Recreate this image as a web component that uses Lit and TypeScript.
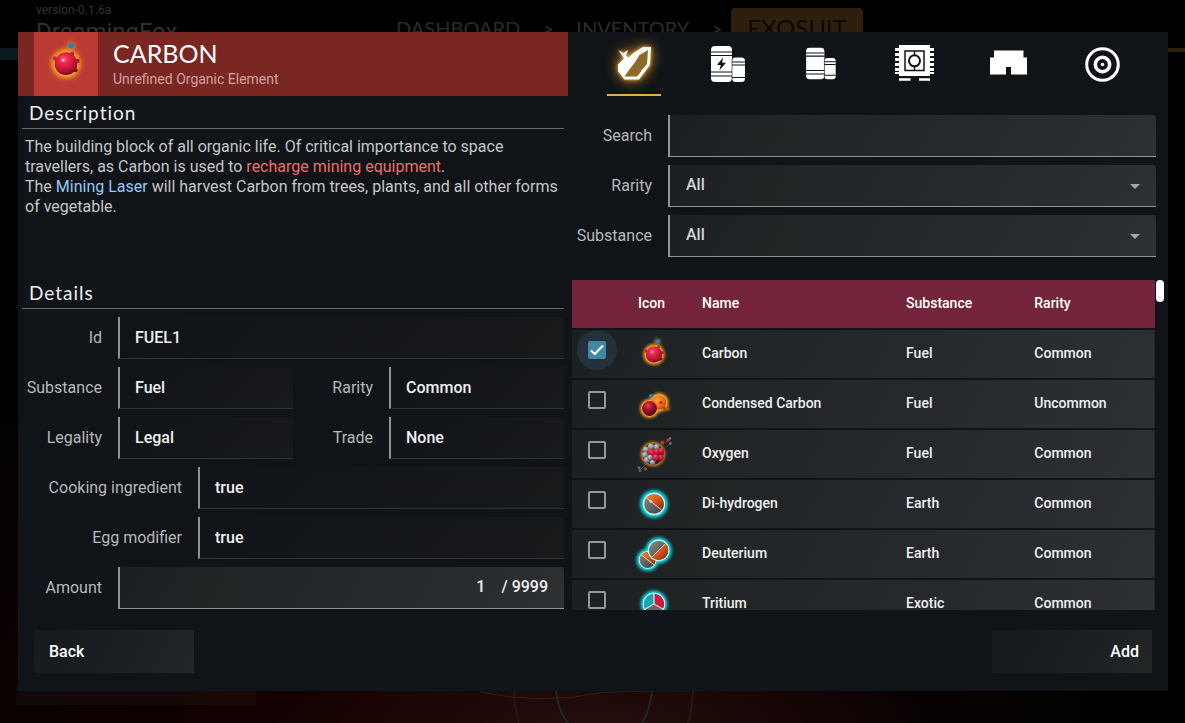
import { LitElement, html, css, svg } from "lit";
import { customElement, state } from "lit/decorators.js";

interface Item {
  id: string;
  name: string;
  substance: string;
  rarity: string;
}

const items: Item[] = [
  { id: "carbon", name: "Carbon", substance: "Fuel", rarity: "Common" },
  { id: "condensed", name: "Condensed Carbon", substance: "Fuel", rarity: "Uncommon" },
  { id: "oxygen", name: "Oxygen", substance: "Fuel", rarity: "Common" },
  { id: "dihydrogen", name: "Di-hydrogen", substance: "Earth", rarity: "Common" },
  { id: "deuterium", name: "Deuterium", substance: "Earth", rarity: "Common" },
  { id: "tritium", name: "Tritium", substance: "Exotic", rarity: "Common" },
];

/* Shared paints for the element artwork, drawn on a 40 x 40 canvas. */
const paints = svg`
  <defs>
    <radialGradient id="red" cx="0.4" cy="0.3" r="0.75">
      <stop offset="0" stop-color="#ff5a78"></stop>
      <stop offset="0.3" stop-color="#ee2347"></stop>
      <stop offset="0.75" stop-color="#b01230"></stop>
      <stop offset="1" stop-color="#5a0a1c"></stop>
    </radialGradient>
    <radialGradient id="darkred" cx="0.4" cy="0.3" r="0.75">
      <stop offset="0" stop-color="#e84058"></stop>
      <stop offset="0.4" stop-color="#a81028"></stop>
      <stop offset="1" stop-color="#450612"></stop>
    </radialGradient>
    <radialGradient id="orange" cx="0.4" cy="0.35" r="0.75">
      <stop offset="0" stop-color="#ffa23e"></stop>
      <stop offset="0.6" stop-color="#e96a12"></stop>
      <stop offset="1" stop-color="#a33c08"></stop>
    </radialGradient>
    <radialGradient id="grey" cx="0.4" cy="0.3" r="0.8">
      <stop offset="0" stop-color="#d0d0d0"></stop>
      <stop offset="0.5" stop-color="#8c8c8c"></stop>
      <stop offset="1" stop-color="#3a3a3a"></stop>
    </radialGradient>
    <linearGradient id="ember" x1="0" y1="0" x2="1" y2="1">
      <stop offset="0" stop-color="#f58a2a"></stop>
      <stop offset="0.5" stop-color="#d9531a"></stop>
      <stop offset="1" stop-color="#7c2408"></stop>
    </linearGradient>
    <linearGradient id="steel" x1="0" y1="0" x2="1" y2="1">
      <stop offset="0" stop-color="#8c8c8c"></stop>
      <stop offset="1" stop-color="#3c3c3c"></stop>
    </linearGradient>
    <filter id="blur" x="-60%" y="-60%" width="220%" height="220%">
      <feGaussianBlur stdDeviation="1.7"></feGaussianBlur>
    </filter>
  </defs>`;

const art: Record<string, unknown> = {
  carbon: svg`
    <circle cx="20" cy="20.5" r="10.6" fill="#f5a01e" filter="url(#blur)"></circle>
    <circle cx="23.5" cy="7.6" r="3.2" fill="#f5a01e" opacity="0.6" filter="url(#blur)"></circle>
    <circle cx="20" cy="20.5" r="8.8" fill="#f0a24a"></circle>
    <circle cx="12.2" cy="16.9" r="1.5" fill="#d01c30"></circle>
    <circle cx="24.4" cy="13.4" r="1.5" fill="#d01c30"></circle>
    <circle cx="28.2" cy="18.5" r="1.6" fill="#b01828"></circle>
    <circle cx="27" cy="25.2" r="1.4" fill="#80141e"></circle>
    <circle cx="20" cy="20.5" r="8.1" fill="url(#red)"></circle>
    <circle cx="18" cy="18" r="1" fill="#ffd0d8"></circle>
    <circle cx="23.6" cy="7.6" r="2" fill="#1c86c8"></circle>`,
  condensed: svg`
    <circle cx="15.5" cy="24.5" r="9.4" fill="#ffa41c" filter="url(#blur)"></circle>
    <circle cx="25" cy="18.5" r="9.4" fill="#ffa41c" filter="url(#blur)"></circle>
    <circle cx="33" cy="24" r="2.6" fill="#ffa41c" opacity="0.7" filter="url(#blur)"></circle>
    <circle cx="15.5" cy="24.5" r="8" fill="#ffb04e"></circle>
    <circle cx="25" cy="18.5" r="8" fill="#ffb04e"></circle>
    <circle cx="25" cy="18.5" r="7.3" fill="url(#orange)"></circle>
    <circle cx="27" cy="18.6" r="1.8" fill="#d32c1a"></circle>
    <circle cx="30.6" cy="24.2" r="1.5" fill="#c81a1a"></circle>
    <circle cx="34.4" cy="23.2" r="1.1" fill="#c81a1a"></circle>
    <circle cx="15.5" cy="24.5" r="7.4" fill="url(#darkred)"></circle>
    <circle cx="16.8" cy="11.8" r="1.9" fill="#1c86b8"></circle>`,
  oxygen: svg`
    <path d="M5 37 13 29M27 11 37 4M33 13l3-4" stroke="#67605a" stroke-width="0.8" fill="none"></path>
    <circle cx="19" cy="20" r="12" fill="#f08a1a" filter="url(#blur)"></circle>
    <circle cx="19" cy="20" r="11.4" fill="#b8712c"></circle>
    <circle cx="19" cy="20" r="10.6" fill="#2b2422"></circle>
    <circle cx="17" cy="12.6" r="3.2" fill="url(#grey)"></circle>
    <circle cx="12" cy="15.6" r="3.2" fill="url(#grey)"></circle>
    <circle cx="11" cy="21" r="3.2" fill="url(#grey)"></circle>
    <circle cx="13" cy="26" r="3.2" fill="url(#grey)"></circle>
    <circle cx="18.6" cy="28.4" r="2.9" fill="url(#grey)"></circle>
    <circle cx="22.600" cy="13" r="3.1" fill="url(#grey)"></circle>
    <circle cx="17.4" cy="18.4" r="3.7" fill="url(#red)"></circle>
    <circle cx="27" cy="17" r="3.1" fill="url(#red)"></circle>
    <circle cx="26.6" cy="23.6" r="3.1" fill="url(#red)"></circle>
    <circle cx="22" cy="23.4" r="3.6" fill="url(#red)"></circle>
    <circle cx="16" cy="23.6" r="2.8" fill="url(#grey)"></circle>
    <circle cx="22.8" cy="17.8" r="2.8" fill="url(#red)"></circle>
    <circle cx="28.4" cy="8.4" r="1.8" fill="#a8421c"></circle>
    <circle cx="34" cy="6" r="1.8" fill="#8e4322"></circle>
    <circle cx="36.4" cy="9.6" r="1.4" fill="#77716c"></circle>
    <circle cx="36" cy="4.4" r="1.2" fill="#77716c"></circle>
    <circle cx="5" cy="33.8" r="1.5" fill="#2c7896"></circle>
    <circle cx="11.4" cy="35" r="1.7" fill="#a8421c"></circle>
    <circle cx="6" cy="36.6" r="1.5" fill="#6e5b50"></circle>`,
  dihydrogen: svg`
    <circle cx="20" cy="20" r="14" fill="#08cfda" filter="url(#blur)"></circle>
    <circle cx="20" cy="20" r="11.200" fill="#c8fcfc"></circle>
    <circle cx="20" cy="20" r="9.800" fill="url(#steel)"></circle>
    <path d="M12.3 13.900A9.800 9.800 0 1 1 27.700 26.100Z" fill="url(#ember)"></path>
    <path d="M12.3 13.900 27.700 26.100" stroke="#f4d9c8" stroke-width="0.9"></path>
    <circle cx="16.8" cy="17.4" r="1.6" fill="#fff" opacity="0.5"></circle>`,
  deuterium: svg`
    <circle cx="24.6" cy="16.400" r="13.2" fill="#08cfda" filter="url(#blur)"></circle>
    <circle cx="13.6" cy="26" r="11.2" fill="#08cfda" filter="url(#blur)"></circle>
    <circle cx="13.6" cy="26" r="9" fill="#c8fcfc"></circle>
    <circle cx="13.6" cy="26" r="8" fill="url(#steel)"></circle>
    <path d="M7.4 21A8 8 0 0 1 20 30.8Z" fill="url(#ember)"></path>
    <path d="M7.4 21 20 30.8" stroke="#f4d9c8" stroke-width="0.9"></path>
    <circle cx="24.6" cy="16.400" r="10.8" fill="#c8fcfc"></circle>
    <circle cx="24.6" cy="16.400" r="9.6" fill="url(#steel)"></circle>
    <path d="M31.4 9.6A9.6 9.6 0 0 1 17.8 23.2Z" fill="url(#ember)"></path>
    <path d="M31.4 9.6 17.8 23.2" stroke="#f4d9c8" stroke-width="0.9"></path>`,
  tritium: svg`
    <circle cx="20" cy="20" r="13.4" fill="#08cfda" filter="url(#blur)"></circle>
    <circle cx="20" cy="20" r="11.200" fill="#d8fcfc"></circle>
    <circle cx="20" cy="20" r="10" fill="#666"></circle>
    <path d="M20 20V10A10 10 0 0 0 11.3 25Z" fill="#14a9ae"></path>
    <path d="M20 20V10A10 10 0 0 1 28.7 25Z" fill="#d2193f"></path>
    <path d="M20 10V20L11.3 25M20 20 28.7 25" stroke="#fff" stroke-width="1" fill="none"></path>`,
};

const canister = (power: boolean) => svg`
  <rect x="3" y="1" width="21" height="36" rx="4" fill="#fff"></rect>
  <rect x="24" y="12.500" width="13" height="24.500" rx="3.500" fill="#fff"></rect>
  <path d="M3 7H24M3 10.500H24M3 27H24M3 31H24M24 17H37M24 20H37M24 32.500H37" stroke="#101318" stroke-width="1.2"></path>
  <path d="M24 14V36" stroke="#101318" stroke-width="0.6"></path>
  ${power ? svg`<path d="M15 12.500 9 20.100H12.800L11.300 25.500 18 17.700H14.200Z" fill="#101318"></path>` : ""}`;

const tabs = [
  {
    label: "Substances",
    icon: svg`
      <path d="M29 2H37L36 20 25 34.500H10.500L4 26V19.500L10 13.500 4.500 5 9.500 8 14 5 12 10.500 14.500 12.500 20 7.500Z" fill="#fff"></path>
      <path d="M34 5 25.500 10 20.500 18 15 25 10.500 31.500H23L28 25.500 26.500 26 29.500 23 33 19Z" fill="#8f6a26"></path>`,
  },
  { label: "Charged products", icon: svg`<g transform="translate(1 0)">${canister(true)}</g>` },
  { label: "Products", icon: svg`<g transform="translate(2.500 2) scale(0.87)">${canister(false)}</g>` },
  {
    label: "Technology",
    icon: svg`
      <path d="M4 0H35V3H39V6H35V8H39V11H35V13H39V16H35V18H39V21H35V23H39V26H35V27H39V29H35V31H4V29H0V27H4V26H0V23H4V21H0V18H4V16H0V13H4V11H0V8H4V6H0V3H4Z" fill="#fff"></path>
      <path d="M4 34.500H15.500M24 34.500H35" stroke="#fff" stroke-width="2.400"></path>
      <rect x="10" y="6" width="19" height="19.500" fill="none" stroke="#101318" stroke-width="1.500"></rect>
      <circle cx="19.500" cy="15.800" r="5.500" fill="none" stroke="#101318" stroke-width="2"></circle>
      <path d="M19.500 6V10.500M19.500 21V26" stroke="#101318" stroke-width="1.500"></path>`,
  },
  {
    label: "Buildings",
    icon: svg`<path d="M6 5.500H35.500V12.500H39V29.500H23V22H18V29.500H2V12.500H6Z" fill="#fff"></path>`,
  },
  {
    label: "Targets",
    icon: svg`
      <circle cx="20.500" cy="19.500" r="15.800" fill="none" stroke="#fff" stroke-width="3"></circle>
      <circle cx="20.500" cy="19.500" r="7.200" fill="none" stroke="#fff" stroke-width="3.600"></circle>
      <circle cx="20.500" cy="19.500" r="1.800" fill="#fff"></circle>`,
  },
];

const caret = svg`<path d="M0 0H10L5 5Z" fill="#a4a7a9"></path>`;

@customElement("element-art")
class ElementArt extends LitElement {
  static properties = { kind: {} };
  declare kind: string;
  static styles = css`
    :host { display: block; }
    .art { display: block; width: 100%; height: 100%; overflow: visible; }
  `;
  render() {
    return html`<svg class="art" viewBox="0 0 40 40" aria-hidden="true">${paints}${art[this.kind]}</svg>`;
  }
}

@customElement("app-root")
class AppRoot extends LitElement {
  @state() private selected = "carbon";

  static styles = css`
    :host {
      display: block;
      position: relative;
      min-height: 100vh;
      overflow: hidden;
      font-family: Roboto, "Liberation Sans", sans-serif;
      font-size: 16px;
      line-height: 20px;
      color: #fff;
      background:
        radial-gradient(ellipse 340px 90px at 50% 100%, #240e0d, transparent),
        radial-gradient(ellipse 700px 420px at 36% 100%, #180000, transparent),
        #010101;
    }
    * { box-sizing: border-box; }

    .page { display: grid; grid-template-columns: 360px 1fr; padding-left: 36px; color: #313131; }
    .version { padding-top: 2px; font-size: 12px; line-height: 16px; }
    .player { font-size: 24px; line-height: 28px; }
    .crumbs { display: flex; align-items: flex-start; padding-top: 8px; }
    .crumb { font-family: Lato, sans-serif; font-size: 20px; line-height: 40px; color: #2a2a2a; text-decoration: none; text-transform: uppercase; }
    .sep { width: 56px; text-align: center; line-height: 44px; }
    .sep-last { width: 42px; padding-left: 14px; text-align: center; line-height: 44px; }
    .current { padding: 0 16px; border-radius: 4px; background: #2c200d; color: #0a0805; font-size: 24px; }

    .horizon { position: absolute; left: 0; right: 0; bottom: 0; width: 100%; height: 38px; }
    .left-line { position: absolute; left: 0; top: 48px; width: 18px; height: 12px; background: #0b1a1f; }
    .right-line { position: absolute; right: 0; top: 48px; width: 17px; height: 4px; background: #2c200d; }

    .dialog {
      position: absolute;
      top: 32px;
      left: 18px;
      right: 17px;
      background: #101318;
    }
    .body { display: grid; grid-template-columns: 550fr 592fr; column-gap: 4px; padding-right: 4px; }
    .left, .right { display: flex; flex-direction: column; min-width: 0; }

    .banner { display: flex; height: 64px; padding-left: 16px; background: #7a2723; }
    .badge { width: 64px; height: 64px; padding: 3px 4px 5px; background: #bc3a35; }
    .badge element-art { width: 56px; height: 56px; }
    .heading { padding-left: 15px; }
    .title { margin: 0; padding-top: 5px; font-family: Lato, sans-serif; font-size: 25px; line-height: 32px; font-weight: 400; text-transform: uppercase; }
    .subtitle { margin: 0; font-size: 14px; line-height: 20px; color: #cca3a1; }

    .section { margin: 0 4px; padding: 1px 7px 0; height: 33px; border-bottom: 1px solid #66686b; font-family: Lato, sans-serif; font-size: 19px; font-weight: 400; line-height: 32px; letter-spacing: 1px; color: #eee; }
    .description { margin: 0; height: 147px; padding: 8px 8px 0 7px; color: #c6c7c8; }
    .warn { color: #ee6e66; }
    .link { color: #90caf9; text-decoration: none; }

    .form { display: grid; grid-template-columns: 84px 1fr 64px 1fr; column-gap: 16px; row-gap: 8px; padding: 8px 4px 1px 0; }
    .form > * { min-width: 0; }
    .label { display: flex; align-items: center; justify-content: flex-end; height: 42px; color: #b8b9ba; white-space: nowrap; }
    .field { display: block; width: 100%; height: 42px; margin: 0; padding: 0 15px; border: 0; border-left: 2px solid #919293; border-bottom: 1px solid #303336; border-radius: 0; outline: 0; font: inherit; font-weight: 500; color: #f0f0f0; background: linear-gradient(135deg, #101318, #17191b); }
    .wide { grid-column: 2 / -1; }
    .sub { grid-column: 1 / -1; display: grid; grid-template-columns: 164px 1fr; column-gap: 16px; }
    .control { border-bottom-color: #919293; border-top-right-radius: 4px; background: linear-gradient(120deg, #1c1f22, #212526 25%, #25282d 60%, #2e3133); }
    .amount { display: flex; align-items: center; justify-content: flex-end; gap: 16px; padding-right: 16px; padding-bottom: 2px; }
    .amount-input { flex: 1; min-width: 0; padding: 0; border: 0; outline: 0; background: none; font: inherit; color: inherit; text-align: right; }

    .tabs { display: grid; grid-template-columns: repeat(6, 1fr); height: 64px; padding: 0 15px; }
    .tab { display: flex; justify-content: center; margin: 0; padding: 13px 0 0; border: 0; background: none; }
    .tab-icon { display: block; width: 54px; height: 51px; padding: 0 7px; border-bottom: 2px solid transparent; }
    .tab-active .tab-icon { border-bottom-color: #ddb04a; }
    .tab-active .glyph { filter: drop-shadow(0 0 2px #f0b040) drop-shadow(0 0 7px #b8801c); }
    .glyph { display: block; width: 40px; height: 40px; overflow: visible; }

    .filters { display: grid; grid-template-columns: 80px 1fr; column-gap: 16px; row-gap: 8px; padding: 19px 8px 23px 0; }
    .select-wrap { display: grid; }
    .select-wrap > * { grid-area: 1 / 1; }
    .select { appearance: none; color: #d6d7d8; padding: 0 16px 2px; }
    .caret { width: 10px; height: 5px; align-self: center; justify-self: end; margin-right: 16px; pointer-events: none; }

    .list { display: flex; gap: 1px; flex: 1 1 0px; min-height: 0; overflow: hidden; }
    .scroller { flex: 1; min-width: 0; overflow-y: auto; scrollbar-width: none; }
    .thumb { width: 8px; height: 22px; border-radius: 4px; background: #fff; }
    .table { width: 100%; table-layout: fixed; border-spacing: 0; font-size: 14px; }
    .head { background: #74243b; }
    .row { background: linear-gradient(120deg, #1c1f22, #212526 25%, #25282d 60%, #2e3133); color: #f0f0f0; }
    th, td { height: 50px; padding: 0 16px 2px; border-bottom: 2px solid #101318; text-align: left; font-weight: 500; }
    .c-check { width: 50px; }
    .c-icon { width: 64px; }
    .c-name { width: 35%; }
    .c-sub { width: 22%; }
    .td-check { padding: 0 0 8px 5px; }
    .td-icon { padding: 0 12px; }
    .td-icon element-art { width: 40px; height: 40px; }
    .tick { display: grid; place-items: center; width: 40px; height: 40px; border-radius: 20px; }
    .tick-on { background: #22313a; }
    .tick > * { grid-area: 1 / 1; }
    .box { appearance: none; width: 18px; height: 18px; margin: 0; border: 2px solid #96999b; border-radius: 2px; }
    .box:checked { border-color: #4188a5; background: #4188a5; }
    .mark { width: 18px; height: 18px; pointer-events: none; }

    .footer { display: flex; justify-content: space-between; padding: 20px 16px 18px; }
    .action { width: 160px; height: 43px; padding: 0 15px; border: 0; background: linear-gradient(120deg, #171a1d, #1b1e22 50%, #222627); color: #fff; font: inherit; font-weight: 500; text-align: left; }
    .action-end { padding-right: 13px; text-align: right; }
  `;

  private field(id: string, label: string, value: string, cls = "") {
    return html`
      <label class="label" for=${id}>${label}</label>
      <input class="field ${cls}" id=${id} .value=${value} readonly />`;
  }

  private filter(id: string, label: string) {
    return html`
      <label class="label" for=${id}>${label}</label>
      <span class="select-wrap">
        <select class="field control select" id=${id}><option>All</option></select>
        <svg class="caret" viewBox="0 0 10 5" aria-hidden="true">${caret}</svg>
      </span>`;
  }

  private row(item: Item) {
    const on = item.id === this.selected;
    return html`
      <tr class="row">
        <td class="td-check">
          <span class="tick ${on ? "tick-on" : ""}">
            <input class="box" type="checkbox" aria-label=${item.name} .checked=${on} @change=${() => (this.selected = item.id)} />
            ${on
              ? html`<svg class="mark" viewBox="0 0 18 18" aria-hidden="true"><path d="M3 9.500 6.800 13 15 4.500" fill="none" stroke="#fff" stroke-width="2"></path></svg>`
              : ""}
          </span>
        </td>
        <td class="td-icon"><element-art kind=${item.id}></element-art></td>
        <td>${item.name}</td>
        <td>${item.substance}</td>
        <td>${item.rarity}</td>
      </tr>`;
  }

  render() {
    return html`
      <header class="page">
        <div>
          <div class="version">version-0.1.6a</div>
          <div class="player">DreamingFox</div>
        </div>
        <nav class="crumbs">
          <a class="crumb" href="#dashboard">Dashboard</a>
          <span class="sep">&gt;</span>
          <a class="crumb" href="#inventory">Inventory</a>
          <span class="sep-last">&gt;</span>
          <a class="crumb current" href="#exosuit">Exosuit</a>
        </nav>
      </header>
      <div class="left-line"></div>
      <div class="right-line"></div>
      <svg class="horizon" viewBox="0 0 1185 38" preserveAspectRatio="none" aria-hidden="true">
        <rect x="16" y="0" width="240" height="20" fill="#fff" opacity="0.03"></rect>
        <path d="M480 7Q540 20 600 8Q640 5 690 6" fill="none" stroke="#262221"></path>
        <path d="M556 6Q558 26 568 38M652 6Q650 26 642 38" fill="none" stroke="#232627" stroke-width="2"></path>
        <path d="M514 6Q515 26 519 38M693 6Q692 26 688 38" fill="none" stroke="#2a1817" stroke-width="2"></path>
      </svg>

      <main class="dialog" role="dialog" aria-label="Carbon">
        <div class="body">
          <section class="left">
            <div class="banner">
              <div class="badge"><element-art kind="carbon"></element-art></div>
              <div class="heading">
                <h1 class="title">Carbon</h1>
                <p class="subtitle">Unrefined Organic Element</p>
              </div>
            </div>
            <h2 class="section">Description</h2>
            <p class="description">
              The building block of all organic life. Of critical importance to space travellers, as Carbon is used to
              <span class="warn">recharge mining equipment</span>.<br />The
              <a class="link" href="#mining-laser">Mining Laser</a> will harvest Carbon from trees, plants, and all
              other forms of vegetable.
            </p>
            <h2 class="section">Details</h2>
            <div class="form">
              ${this.field("id", "Id", "FUEL1", "wide")}
              ${this.field("substance", "Substance", "Fuel")}
              ${this.field("rarity", "Rarity", "Common")}
              ${this.field("legality", "Legality", "Legal")}
              ${this.field("trade", "Trade", "None")}
              <div class="sub">${this.field("cooking", "Cooking ingredient", "true")}</div>
              <div class="sub">${this.field("egg", "Egg modifier", "true")}</div>
              <label class="label" for="amount">Amount</label>
              <div class="field control amount wide">
                <input class="amount-input" id="amount" .value=${"1"} /><span>/ 9999</span>
              </div>
            </div>
          </section>

          <section class="right">
            <div class="tabs" role="tablist">
              ${tabs.map(
                (t, i) => html`
                  <button class="tab ${i === 0 ? "tab-active" : ""}" role="tab" aria-label=${t.label} aria-selected=${i === 0}>
                    <span class="tab-icon"><svg class="glyph" viewBox="0 0 40 40">${t.icon}</svg></span>
                  </button>`,
              )}
            </div>
            <div class="filters">
              <label class="label" for="search">Search</label>
              <input class="field control" id="search" type="text" />
              ${this.filter("f-rarity", "Rarity")} ${this.filter("f-substance", "Substance")}
            </div>
            <div class="list">
              <div class="scroller">
                <table class="table">
                  <thead>
                    <tr class="head">
                      <th class="c-check"></th>
                      <th class="c-icon">Icon</th>
                      <th class="c-name">Name</th>
                      <th class="c-sub">Substance</th>
                      <th>Rarity</th>
                    </tr>
                  </thead>
                  <tbody>${items.map((i) => this.row(i))}</tbody>
                </table>
              </div>
              <div class="thumb"></div>
            </div>
          </section>
        </div>
        <footer class="footer">
          <button class="action">Back</button>
          <button class="action action-end">Add</button>
        </footer>
      </main>
    `;
  }
}
